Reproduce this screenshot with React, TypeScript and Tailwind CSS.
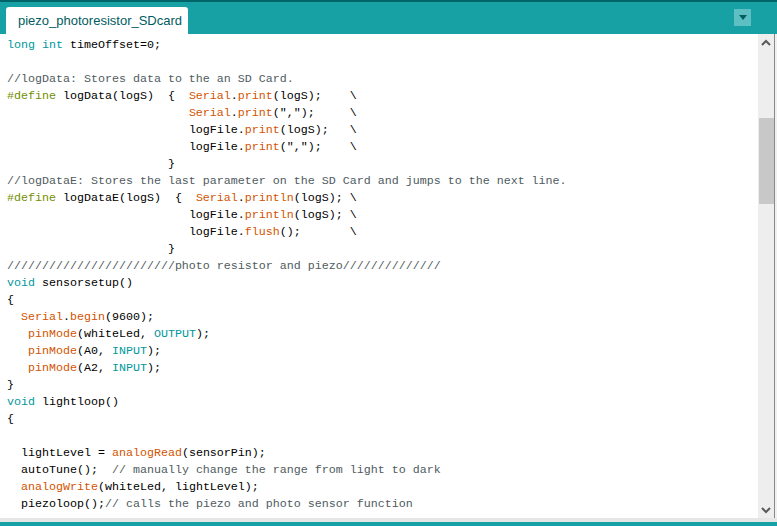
type Kind = "p" | "k" | "f" | "c" | "d";
type Tok = [string, Kind];

const color: Record<Kind, string> = {
  p: "text-[#000000]",
  k: "text-[#00979c]",
  f: "text-[#d35400]",
  c: "text-[#4f5b60]",
  d: "text-[#728e00]",
};

const sp = (n: number): Tok => [" ".repeat(n), "p"];

const lines: Tok[][] = [
  [["long", "k"], [" ", "p"], ["int", "k"], [" timeOffset=0;", "p"]],
  [],
  [["//logData: Stores data to the an SD Card.", "c"]],
  [["#define", "d"], [" logData(logS)  {  ", "p"], ["Serial", "f"], [".", "p"], ["print", "f"], ["(logS);    \\", "p"]],
  [sp(26), ["Serial", "f"], [".", "p"], ["print", "f"], ['(",");     \\', "p"]],
  [sp(26), ["logFile.", "p"], ["print", "f"], ["(logS);   \\", "p"]],
  [sp(26), ["logFile.", "p"], ["print", "f"], ['(",");    \\', "p"]],
  [sp(23), ["}", "p"]],
  [["//logDataE: Stores the last parameter on the SD Card and jumps to the next line.", "c"]],
  [["#define", "d"], [" logDataE(logS)  {  ", "p"], ["Serial", "f"], [".", "p"], ["println", "f"], ["(logS); \\", "p"]],
  [sp(26), ["logFile.", "p"], ["println", "f"], ["(logS); \\", "p"]],
  [sp(26), ["logFile.", "p"], ["flush", "f"], ["();       \\", "p"]],
  [sp(23), ["}", "p"]],
  [["////////////////////////photo resistor and piezo//////////////", "c"]],
  [["void", "k"], [" sensorsetup()", "p"]],
  [["{", "p"]],
  [sp(2), ["Serial", "f"], [".", "p"], ["begin", "f"], ["(9600);", "p"]],
  [sp(3), ["pinMode", "f"], ["(whiteLed, ", "p"], ["OUTPUT", "k"], [");", "p"]],
  [sp(3), ["pinMode", "f"], ["(A0, ", "p"], ["INPUT", "k"], [");", "p"]],
  [sp(3), ["pinMode", "f"], ["(A2, ", "p"], ["INPUT", "k"], [");", "p"]],
  [["}", "p"]],
  [["void", "k"], [" lightloop()", "p"]],
  [["{", "p"]],
  [],
  [sp(2), ["lightLevel = ", "p"], ["analogRead", "f"], ["(sensorPin);", "p"]],
  [sp(2), ["autoTune();  ", "p"], ["// manually change the range from light to dark", "c"]],
  [sp(2), ["analogWrite", "f"], ["(whiteLed, lightLevel);", "p"]],
  [sp(2), ["piezoloop();", "p"], ["// calls the piezo and photo sensor function", "c"]],
];

const Chevron = ({ up }: { up?: boolean }) => (
  <svg width="10" height="7" viewBox="0 0 10 7" className={up ? "" : "rotate-180"}>
    <path d="M1 6 L5 2 L9 6" fill="none" stroke="#5a5a5a" strokeWidth="2" />
  </svg>
);

export default function App() {
  return (
    <div className="w-[777px] h-[526px] flex flex-col bg-[#17a1a5] overflow-hidden">
      {/* tab bar */}
      <div className="h-[34px] border-t-2 border-[#006468] flex items-end justify-between pl-[6px] pr-[26px]">
        <div className="h-[27px] w-[182px] bg-white rounded-t-[3px] pl-[12px] pt-[6px] text-[13px] text-[#005c5f] font-['Liberation_Sans',Arial,sans-serif] leading-[15px]">
          piezo_photoresistor_SDcard
        </div>
        <div className="self-start mt-[7px] w-[17px] h-[17px] bg-[#5ebfc2] flex items-center justify-center">
          <div className="w-0 h-0 border-l-[4px] border-r-[4px] border-t-[5px] border-l-transparent border-r-transparent border-t-[#005c5f]" />
        </div>
      </div>

      {/* editor */}
      <div className="h-[484px] flex bg-white">
        <div className="flex-1 pt-[3px] pl-[7px] font-['Liberation_Mono','Courier_New',monospace] text-[11.67px] leading-[17px] whitespace-pre overflow-hidden">
          {lines.map((l, i) => (
            <div key={i} className="h-[17px]">
              {l.map(([t, k], j) => (
                <span key={j} className={color[k]}>
                  {t}
                </span>
              ))}
            </div>
          ))}
        </div>
        <div className="w-[16px] bg-[#eeeeee] flex flex-col items-center">
          <div className="h-[16px] flex items-center pt-[1px]">
            <Chevron up />
          </div>
          <div className="h-[68px]" />
          <div className="w-[15px] h-[86px] bg-[#c8c8c8]" />
          <div className="flex-1" />
          <div className="h-[16px] flex items-center">
            <Chevron />
          </div>
        </div>
        <div className="w-[1px] bg-[#8a8a8a]" />
        <div className="w-[2px] bg-[#f0f0f0]" />
      </div>

      <div className="h-[4px] bg-[#e6e6e6]" />
      <div className="flex-1 bg-[#17a1a5]" />
    </div>
  );
}
